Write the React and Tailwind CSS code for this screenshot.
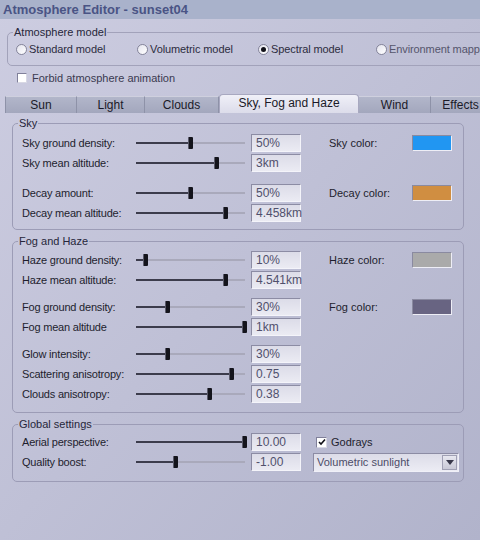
import React from 'react';

const sky = [
  [
    { label: 'Sky ground density:', pos: 50, value: '50%' },
    { label: 'Sky mean altitude:', pos: 74, value: '3km' },
  ],
  [
    { label: 'Decay amount:', pos: 50, value: '50%' },
    { label: 'Decay mean altitude:', pos: 83, value: '4.458km' },
  ],
];

const fog = [
  [
    { label: 'Haze ground density:', pos: 9, value: '10%' },
    { label: 'Haze mean altitude:', pos: 83, value: '4.541km' },
  ],
  [
    { label: 'Fog ground density:', pos: 29, value: '30%' },
    { label: 'Fog mean altitude', pos: 100, value: '1km' },
  ],
  [
    { label: 'Glow intensity:', pos: 29, value: '30%' },
    { label: 'Scattering anisotropy:', pos: 88, value: '0.75' },
    { label: 'Clouds anisotropy:', pos: 68, value: '0.38' },
  ],
];

const tabs = [
  { name: 'Sun', w: 'w-[72px]' },
  { name: 'Light', w: 'w-[68px]' },
  { name: 'Clouds', w: 'w-[74px]' },
  { name: 'Sky, Fog and Haze', w: 'w-[140px]', active: true },
  { name: 'Wind', w: 'w-[72px]' },
  { name: 'Effects', w: 'w-[60px]' },
];

const Slider = ({ pos }) => (
  <div className="relative w-[109px] h-[20px] ml-[1px] shrink-0">
    <div className="absolute left-0 right-0 top-[9px] h-[2px] bg-[#a9a9bb]" />
    <div className="absolute left-0 top-[9px] h-[2px] bg-[#3c3c4c]" style={{ width: `${pos}%` }} />
    <div
      className="absolute top-[4px] w-[5px] h-[12px] -ml-[3px] rounded-[1px] bg-[#14141c] border-l border-[#5a5a6a]"
      style={{ left: `${pos}%` }}
    />
  </div>
);

const ValueBox = ({ value }) => (
  <div className="w-[50px] h-[18px] shrink-0 bg-linear-to-b from-[#dcdce8] to-[#ebebf3] border border-t-[#8c8ca4] border-l-[#8c8ca4] border-r-[#f4f4fa] border-b-[#f4f4fa] pl-[4px] leading-[16px] text-[12px] text-[#50506c]">
    {value}
  </div>
);

const Swatch = ({ color }) => (
  <div className={`w-[40px] h-[16px] shrink-0 border border-t-[#8a8aa0] border-l-[#8a8aa0] border-r-[#eeeef6] border-b-[#eeeef6] ${color}`} />
);

const Row = ({ label, pos, value, right }) => (
  <div className="flex items-center h-[20px] pl-[4px]">
    <div className="w-[113px] shrink-0 tracking-[-0.2px]">{label}</div>
    <Slider pos={pos} />
    <div className="ml-[6px]">
      <ValueBox value={value} />
    </div>
    {right}
  </div>
);

const ColorSide = ({ label, color }) => (
  <div className="flex items-center ml-[28px]">
    <div className="w-[83px]">{label}</div>
    <Swatch color={color} />
  </div>
);

const Group = ({ title, className = '', children }) => (
  <fieldset className={`ml-[12px] w-[452px] border border-[#9c9cb6] rounded-[5px] pl-[5px] pr-[4px] ${className}`}>
    <legend className="px-[1px] leading-[13px] text-[#26263a]">{title}</legend>
    {children}
  </fieldset>
);

const Radio = ({ label, checked, w, dim }) => (
  <div className={`flex items-center gap-[2px] shrink-0 ${w}`}>
    <span className="w-[11px] h-[11px] rounded-full border border-[#84849a] bg-linear-to-br from-[#e4e4ee] to-white flex items-center justify-center">
      {checked && <span className="w-[5px] h-[5px] rounded-full bg-[#101018]" />}
    </span>
    <span className={dim ? 'text-[#55556c]' : 'text-[#2c2c3e]'}>{label}</span>
  </div>
);

export default function App() {
  return (
    <div className="w-[480px] h-[540px] overflow-hidden bg-linear-to-br from-[#cdcde1] to-[#b1b3cb] font-['Liberation_Sans',Arial,sans-serif] text-[11px] text-[#1e1e2e]">
      <div className="h-[19px] bg-[#a9b2cb] pl-[3px] leading-[19px] text-[13px] font-bold text-[#4a5485] whitespace-nowrap">
        Atmosphere Editor - sunset04
      </div>

      <fieldset className="ml-[7px] mt-[7px] w-[500px] border border-[#a2a2ba] rounded-[5px] pl-[5px] pb-[6px]">
        <legend className="px-[1px] leading-[13px] text-[#26263a]">Atmosphere model</legend>
        <div className="flex items-center h-[20px] pl-[3px] whitespace-nowrap tracking-[-0.1px]">
          <Radio label="Standard model" w="w-[121px]" />
          <Radio label="Volumetric model" w="w-[121px]" />
          <Radio label="Spectral model" w="w-[118px]" checked />
          <Radio label="Environment mapping" w="w-[130px]" dim />
        </div>
      </fieldset>

      <div className="flex items-center gap-[5px] h-[16px] mt-[4px] pl-[17px] text-[#3a3a50]">
        <span className="w-[10px] h-[10px] bg-white border border-t-[#80809a] border-l-[#80809a] border-r-[#d8d8e4] border-b-[#d8d8e4]" />
        <span>Forbid atmosphere animation</span>
      </div>

      <div className="flex items-end h-[19px] mt-[8px] ml-[5px] whitespace-nowrap text-[12px]">
        {tabs.map((t) =>
          t.active ? (
            <div
              key={t.name}
              className={`${t.w} h-[19px] shrink-0 rounded-t-[4px] border border-b-0 border-[#a8a8c0] bg-linear-to-b from-[#f0f0f8] to-[#dcdcea] text-center leading-[17px] text-[#1a1a28]`}
            >
              {t.name}
            </div>
          ) : (
            <div
              key={t.name}
              className={`${t.w} h-[17px] shrink-0 border-t border-t-[#cfd0de] border-r border-r-[#8e92a8] first:border-l first:border-l-[#8e92a8] bg-linear-to-b from-[#b2b6ca] to-[#a3a7bd] text-center leading-[17px] text-[#1a1a28]`}
            >
              {t.name}
            </div>
          )
        )}
      </div>

      <Group title="Sky" className="mt-[4px] pt-[3px] pb-[6px]">
        {sky.map((block, bi) => (
          <div key={bi} className={bi > 0 ? 'mt-[10px]' : ''}>
            {block.map((r, ri) => (
              <Row
                key={r.label}
                {...r}
                right={
                  ri === 0 ? (
                    bi === 0 ? (
                      <ColorSide label="Sky color:" color="bg-[#2196f2]" />
                    ) : (
                      <ColorSide label="Decay color:" color="bg-[#d08e41]" />
                    )
                  ) : null
                }
              />
            ))}
          </div>
        ))}
      </Group>

      <Group title="Fog and Haze" className="mt-[5px] pt-[2px] pb-[8px]">
        {fog.map((block, bi) => (
          <div key={bi} className={bi > 0 ? 'mt-[7px]' : ''}>
            {block.map((r, ri) => (
              <Row
                key={r.label}
                {...r}
                right={
                  ri === 0 && bi === 0 ? (
                    <ColorSide label="Haze color:" color="bg-[#aaaaaa]" />
                  ) : ri === 0 && bi === 1 ? (
                    <ColorSide label="Fog color:" color="bg-[#686482]" />
                  ) : null
                }
              />
            ))}
          </div>
        ))}
      </Group>

      <Group title="Global settings" className="mt-[5px] pt-[1px] pb-[9px]">
        <Row
          label="Aerial perspective:"
          pos={100}
          value="10.00"
          right={
            <div className="flex items-center gap-[4px] ml-[15px]">
              <span className="w-[11px] h-[11px] bg-white border border-t-[#80809a] border-l-[#80809a] border-r-[#d8d8e4] border-b-[#d8d8e4] flex items-center justify-center">
                <svg width="8" height="8" viewBox="0 0 8 8">
                  <path d="M1 4 L3 6 L7 1.5" fill="none" stroke="#101018" strokeWidth="1.6" />
                </svg>
              </span>
              <span>Godrays</span>
            </div>
          }
        />
        <Row
          label="Quality boost:"
          pos={37}
          value="-1.00"
          right={
            <div className="ml-[12px] w-[146px] h-[19px] flex items-stretch bg-linear-to-b from-[#dcdce8] to-[#ececf4] border border-t-[#8c8ca4] border-l-[#8c8ca4] border-r-[#f0f0f8] border-b-[#f0f0f8]">
              <div className="flex-1 pl-[3px] leading-[17px] text-[#4c4c68] whitespace-nowrap">Volumetric sunlight</div>
              <div className="w-[15px] my-[1px] mr-[1px] bg-linear-to-b from-[#e8e8f0] to-[#c8c8d6] border border-[#a0a0b4] flex items-center justify-center">
                <svg width="8" height="5" viewBox="0 0 8 5">
                  <path d="M0 0 H8 L4 5 Z" fill="#38384a" />
                </svg>
              </div>
            </div>
          }
        />
      </Group>
    </div>
  );
}
